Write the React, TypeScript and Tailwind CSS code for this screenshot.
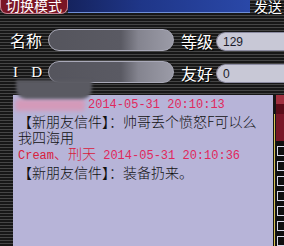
const cjk = '"Noto Sans CJK SC", "Noto Sans", sans-serif';
const mono = '"Liberation Mono", "Noto Sans CJK SC", monospace';

function Label({ children }: { children: React.ReactNode }) {
  return (
    <div className="text-[16px] leading-[16px] text-white [text-shadow:1px_1px_0_#000]" style={{ fontFamily: cjk }}>
      {children}
    </div>
  );
}

function BlurPill() {
  // redacted value: blurred dark blob over grey pill
  return (
    <div className="h-[22px] w-[126px] rounded-full border border-[#a9a9b8] bg-[linear-gradient(to_right,#55555d_0%,#5a5a63_58%,#84848f_72%,#9b9ba7_100%)] blur-[0.6px]" />
  );
}

function ValuePill({ value }: { value: string }) {
  return (
    <div
      className="flex h-[19px] flex-1 items-center rounded-l-full border border-r-0 border-[#8c8ca2] bg-[#c8c8d6] pl-[6px] text-[12px] text-[#1c1c2a]"
      style={{ fontFamily: '"Liberation Sans", sans-serif' }}
    >
      {value}
    </div>
  );
}

export default function App() {
  return (
    <div className="relative flex h-[246px] w-[284px] flex-col overflow-hidden bg-[repeating-linear-gradient(to_bottom,#454545_0px,#454545_1px,#171717_1px,#171717_3px)]">
      {/* top bar */}
      <div className="flex h-[14px] shrink-0">
        <div
          className="flex w-[68px] items-end justify-center overflow-hidden rounded-b-[7px] border border-t-0 border-[#c88090] bg-[#7a1626] pb-[1px] text-[14px] leading-none whitespace-nowrap text-white"
          style={{ fontFamily: cjk }}
        >
          切换模式
        </div>
        <div className="h-[13px] flex-1 border-b border-[#6f8ed6] bg-[linear-gradient(to_right,#15235e,#1f3688_40%,#2a48a8)]" />
        <div
          className="flex w-[34px] items-end overflow-hidden pl-[4px] pb-[1px] text-[14px] leading-none whitespace-nowrap text-white [text-shadow:1px_1px_0_#000]"
          style={{ fontFamily: cjk }}
        >
          发送
        </div>
      </div>

      {/* info rows */}
      <div className="flex shrink-0 flex-col gap-[10px] pt-[15px] pb-[12px]">
        <div className="flex h-[22px] items-center">
          <div className="ml-[10px] w-[38px]">
            <Label>名称</Label>
          </div>
          <BlurPill />
          <div className="ml-[7px] mt-[2px] w-[35px]">
            <Label>等级</Label>
          </div>
          <div className="mt-[3px] flex flex-1">
            <ValuePill value="129" />
          </div>
        </div>
        <div className="flex h-[22px] items-center">
          <div className="ml-[10px] w-[38px]">
            <div className="flex w-[32px] justify-between pl-[3px] text-[15px] leading-[16px] text-white [text-shadow:1px_1px_0_#000]" style={{ fontFamily: '"Liberation Serif", serif' }}>
              <span>I</span>
              <span>D</span>
            </div>
          </div>
          <BlurPill />
          <div className="ml-[7px] mt-[2px] w-[35px]">
            <Label>友好</Label>
          </div>
          <div className="mt-[3px] flex flex-1">
            <ValuePill value="0" />
          </div>
        </div>
      </div>

      {/* message panel */}
      <div className="flex flex-1">
        <div className="w-[13px]" />
        <div className="w-[260px] bg-[#b7b4d8] pt-[2px] pl-[5px] pr-[6px] text-[14px] leading-[16px] font-light text-[#111]" style={{ fontFamily: cjk }}>
          <div className="flex items-center">
            <span className="-ml-[3px] inline-block h-[12px] w-[70px] rounded-[4px] bg-[#d49ab9] blur-[2px]" />
            <span className="ml-[3px] text-[12px] font-normal text-[#e0285c]" style={{ fontFamily: mono }}>
              2014-05-31 20:10:13
            </span>
          </div>
          <div>【新朋友信件】：帅哥丢个愤怒F可以么我四海用</div>
          <div className="text-[#d8203c]">
            <span className="text-[12px] font-normal" style={{ fontFamily: mono }}>Cream</span>
            <span>、刑天</span>
            <span className="text-[12px] font-normal text-[#e0285c]" style={{ fontFamily: mono }}>
              {' '}2014-05-31 20:10:36
            </span>
          </div>
          <div>【新朋友信件】：装备扔来。</div>
        </div>
        <div className="w-[1px] bg-[#151515]" />
        <div className="flex w-[1px] flex-col">
          <div className="h-[19px] bg-[#151515]" />
          <div className="flex-1 bg-[#d8c258]" />
        </div>
        <div className="w-[1px] bg-[#151515]" />
        <div className="flex w-[8px] flex-col bg-[#0e0e0e]">
          <div className="h-[9px] bg-[#a0303f]" />
          <div className="h-[10px] bg-[#5a0c18]" />
          <div className="h-[27px] bg-[#781626]" />
          <div className="mt-[5px] flex flex-col gap-[5px] pl-[1px]">
            {[0, 1, 2, 3, 4, 5, 6].map((i) => (
              <div key={i} className="h-[10px] w-[8px] border-[1.5px] border-r-0 border-[#d8d8e8] bg-[#0e0e0e]" />
            ))}
          </div>
        </div>
      </div>

      {/* redaction smear spilling from the ID field */}
      <div className="absolute top-[80px] left-[16px] h-[19px] w-[76px] rounded-b-[10px] bg-[#5a5a62] blur-[1.5px]" />
    </div>
  );
}
